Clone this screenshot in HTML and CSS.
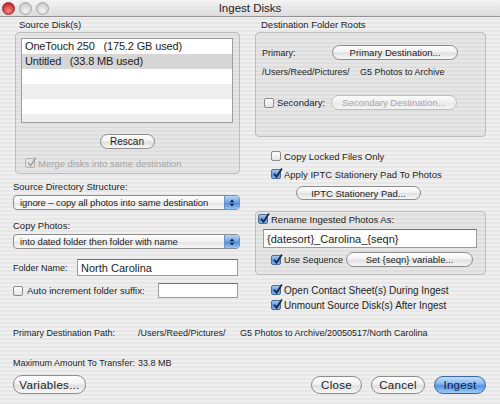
FILE: index.html
```html
<!DOCTYPE html>
<html lang="en">
<head>
  <meta charset="UTF-8" />
  <title>Ingest Disks</title>
  <link rel="stylesheet" href="styles.css">
</head>
<body>

  <!-- Titelbalk -->
  <div class="titlebar">
    <div class="lights">
      <span class="light red"></span>
      <span class="light"></span>
      <span class="light"></span>
    </div>
    <div class="title">Ingest Disks</div>
    <div></div>
  </div>

  <div class="content">
    <div class="columns">

      <!-- Linker kolom -->
      <div class="col">
        <div class="group-label">Source Disk(s)</div>
        <div class="group source">
          <ul class="disk-list">
            <li>OneTouch 250&nbsp;&nbsp; (175.2 GB used)</li>
            <li class="selected">Untitled&nbsp;&nbsp; (33.8 MB used)</li>
            <li></li>
            <li class="stripe"></li>
            <li></li>
            <li class="stripe"></li>
          </ul>
          <div class="center">
            <div class="btn rescan">Rescan</div>
          </div>
          <div class="check merge disabled">
            <span class="box plain"><svg viewBox="0 0 12 12"><path d="M2.2 6.2 L5 9.6 L10.8 0.6"/></svg></span>
            Merge disks into same destination
          </div>
        </div>

        <div class="field-label">Source Directory Structure:</div>
        <div class="popup">
          <span>ignore – copy all photos into same destination</span>
          <span class="arrows"><svg viewBox="0 0 10 12"><path d="M5 1.5 L8 5 L2 5 Z M5 10.5 L8 7 L2 7 Z"/></svg></span>
        </div>

        <div class="field-label gap">Copy Photos:</div>
        <div class="popup">
          <span>into dated folder then folder with name</span>
          <span class="arrows"><svg viewBox="0 0 10 12"><path d="M5 1.5 L8 5 L2 5 Z M5 10.5 L8 7 L2 7 Z"/></svg></span>
        </div>

        <div class="folder-row">
          <span class="folder-label">Folder Name:</span>
          <div class="textfield folder">North Carolina</div>
        </div>

        <div class="auto-row">
          <span class="box"></span>
          <span class="auto-label">Auto increment folder suffix:</span>
          <div class="textfield suffix"></div>
        </div>
      </div>

      <!-- Rechter kolom -->
      <div class="col">
        <div class="group-label">Destination Folder Roots</div>
        <div class="group dest">
          <div class="dest-row">
            <span class="dest-label">Primary:</span>
            <div class="btn dest-btn">Primary Destination...</div>
          </div>
          <div class="path-line">
            <span class="path-root">/Users/Reed/Pictures/</span>
            <span>G5 Photos to Archive</span>
          </div>
          <div class="dest-row secondary">
            <span class="box"></span>
            <span class="sec-label">Secondary:</span>
            <div class="btn dest-btn disabled">Secondary Destination...</div>
          </div>
        </div>

        <div class="check opt first">
          <span class="box"></span>
          Copy Locked Files Only
        </div>
        <div class="check opt">
          <span class="box on"><svg viewBox="0 0 12 12"><path d="M2.2 6.2 L5 9.6 L10.8 0.6"/></svg></span>
          Apply IPTC Stationery Pad To Photos
        </div>
        <div class="btn iptc">IPTC Stationery Pad...</div>

        <div class="group rename">
          <div class="check rename-check">
            <span class="box on"><svg viewBox="0 0 12 12"><path d="M2.2 6.2 L5 9.6 L10.8 0.6"/></svg></span>
            Rename Ingested Photos As:
          </div>
          <div class="textfield pattern">{datesort}_Carolina_{seqn}</div>
          <div class="seq-row">
            <span class="box on"><svg viewBox="0 0 12 12"><path d="M2.2 6.2 L5 9.6 L10.8 0.6"/></svg></span>
            <span class="seq-label">Use Sequence</span>
            <div class="btn seq-btn">Set {seqn} variable...</div>
          </div>
        </div>

        <div class="check opt big first-after">
          <span class="box on"><svg viewBox="0 0 12 12"><path d="M2.2 6.2 L5 9.6 L10.8 0.6"/></svg></span>
          Open Contact Sheet(s) During Ingest
        </div>
        <div class="check opt big">
          <span class="box on"><svg viewBox="0 0 12 12"><path d="M2.2 6.2 L5 9.6 L10.8 0.6"/></svg></span>
          Unmount Source Disk(s) After Ingest
        </div>
      </div>
    </div>

    <div class="info-row path">
      <span>Primary Destination Path:</span>
      <span>/Users/Reed/Pictures/</span>
      <span>G5 Photos to Archive/20050517/North Carolina</span>
    </div>

    <div class="info-row max">
      <span>Maximum Amount To Transfer:</span>
      <span>33.8 MB</span>
    </div>

    <div class="footer">
      <div class="btn big-btn variables">Variables...</div>
      <div class="footer-right">
        <div class="btn big-btn close">Close</div>
        <div class="btn big-btn cancel">Cancel</div>
        <div class="btn big-btn default ingest">Ingest</div>
      </div>
    </div>
  </div>

</body>
</html>
```

FILE: styles.css
```css
* {
  margin: 0;
  padding: 0;
  box-sizing: border-box;
}

body {
  width: 500px;
  height: 404px;
  overflow: hidden;
  font-family: "Liberation Sans", Arial, sans-serif;
  font-size: 9.5px;
  color: #1d1d1d;
  background: repeating-linear-gradient(#efefef 0 2px, #e7e7e7 2px 4px);
}

/* Titelbalk */
.titlebar {
  height: 17px;
  display: grid;
  grid-template-columns: 1fr auto 1fr;
  align-items: center;
  background: linear-gradient(#f3f3f3, #dcdcdc);
  border-bottom: 1px solid #929292;
}

.lights {
  display: flex;
  gap: 4px;
  padding-left: 2px;
}

.light {
  width: 13px;
  height: 13px;
  border-radius: 50%;
  border: 1px solid #a5a5a5;
  background: radial-gradient(circle at 50% 70%, #f4f4f4, #cfcfcf 70%, #b9b9b9);
}

.light.red {
  border-color: #9b2a2a;
  background: radial-gradient(circle at 50% 70%, #f28a8a, #d53a3a 60%, #a11d1d);
}

.title {
  font-size: 11.5px;
  color: #222;
}

/* Inhoud */
.content {
  padding: 2px 14px 0 13px;
}

.columns {
  display: grid;
  grid-template-columns: 227px 231px;
  gap: 15px;
}

.col {
  display: flex;
  flex-direction: column;
}

.group-label {
  height: 12px;
  line-height: 12px;
  padding-left: 6px;
}

.group {
  border: 1px solid #bcbcbc;
  border-radius: 4px;
  background: rgba(0, 0, 0, 0.035);
}

.group.source {
  margin: 1px 0 0 2px;
  height: 142px;
  padding: 5px 6px 0 5px;
}

.disk-list {
  list-style: none;
  height: 85px;
  overflow: hidden;
  background: #fff;
  border: 1px solid #9c9c9c;
  font-size: 11px;
  letter-spacing: -0.15px;
}

.disk-list li {
  height: 15px;
  line-height: 15px;
  padding-left: 3px;
}

.disk-list li.selected {
  background: #d6d6d6;
}

.disk-list li.stripe {
  background: #efefef;
}

.center {
  display: flex;
  justify-content: center;
}

/* Knoppen */
.btn {
  display: flex;
  align-items: center;
  justify-content: center;
  height: 15px;
  border: 1px solid #8c8c8c;
  border-radius: 8px;
  background: linear-gradient(#ffffff, #f1f1f1 45%, #e0e0e0 55%, #f7f7f7);
  font-size: 9.5px;
  color: #1d1d1d;
  white-space: nowrap;
  flex: none;
}

.btn.disabled {
  color: #a9a9a9;
  border-color: #bdbdbd;
  background: linear-gradient(#fbfbfb, #efefef 50%, #e9e9e9 55%, #f5f5f5);
}

.btn.rescan {
  margin-top: 11px;
  width: 55px;
  font-size: 10px;
}

.big-btn {
  height: 18px;
  border-radius: 9px;
  font-size: 11.5px;
  letter-spacing: 0.3px;
}

.btn.default {
  border-color: #3a68a6;
  background: linear-gradient(#c6ddf8, #82b4ee 45%, #5192e2 55%, #9fcdf8);
  color: #10233f;
}

/* Vinkjes */
.check {
  display: flex;
  align-items: center;
  gap: 3px;
  height: 12px;
  white-space: nowrap;
}

.box {
  width: 10px;
  height: 10px;
  flex: none;
  border: 1px solid #8a8a8a;
  border-radius: 2px;
  background: linear-gradient(#fdfdfd, #e4e4e4);
  position: relative;
}

.box svg {
  position: absolute;
  left: 0;
  top: -2px;
  width: 11px;
  height: 11px;
  overflow: visible;
}

.box svg path {
  fill: none;
  stroke: #15284a;
  stroke-width: 1.9;
}

.box.on {
  border-color: #4c6d98;
  background: linear-gradient(#a9cbf0, #5e93d4 55%, #7fb2ea);
}

.box.plain {
  border-color: #b1b1b1;
  background: transparent;
}

.check.disabled {
  color: #a4a4a4;
}

.check.disabled .box svg path {
  stroke: #9a9a9a;
  stroke-width: 1.4;
}

.check.merge {
  margin: 8px 0 0 4px;
}

/* Keuzemenu's */
.field-label {
  margin-top: 7px;
  height: 12px;
  line-height: 12px;
}

.field-label.gap {
  margin-top: 10px;
}

.popup {
  margin-top: 2px;
  height: 15px;
  display: flex;
  align-items: center;
  justify-content: space-between;
  border: 1px solid #8c8c8c;
  border-radius: 4px;
  background: linear-gradient(#ffffff, #f2f2f2 50%, #e4e4e4 55%, #f8f8f8);
  padding-left: 6px;
  overflow: hidden;
  letter-spacing: -0.1px;
}

.arrows {
  width: 15px;
  height: 100%;
  display: flex;
  align-items: center;
  justify-content: center;
  border-left: 1px solid #6d8fbd;
  background: linear-gradient(#b8d5f5, #6ca2e2 50%, #4f8bd8 55%, #98c6f5);
}

.arrows svg {
  width: 8px;
  height: 10px;
}

.arrows svg path {
  fill: #142848;
}

/* Tekstvelden */
.textfield {
  background: #fff;
  border: 1px solid #9b9b9b;
  border-top-color: #6f6f6f;
  font-size: 11px;
  display: flex;
  align-items: center;
  padding-left: 3px;
  white-space: nowrap;
}

.folder-row {
  margin-top: 10px;
  display: flex;
  align-items: center;
}

.folder-label {
  width: 64px;
  font-size: 9px;
}

.textfield.folder {
  width: 161px;
  height: 17px;
}

.auto-row {
  margin-top: 7px;
  display: flex;
  align-items: center;
  white-space: nowrap;
}

.auto-label {
  margin-left: 4px;
}

.textfield.suffix {
  margin: 0 2px 0 auto;
  width: 80px;
  height: 15px;
}

/* Bestemming */
.group.dest {
  margin-top: 1px;
  height: 105px;
  padding: 12px 0 0 6px;
}

.dest-row {
  display: flex;
  align-items: center;
  height: 15px;
  white-space: nowrap;
}

.dest-label {
  width: 70px;
  font-size: 9px;
}

.btn.dest-btn {
  width: 126px;
}

.path-line {
  margin-top: 6px;
  height: 12px;
  line-height: 12px;
  display: flex;
  font-size: 9px;
}

.path-root {
  width: 98px;
}

.dest-row.secondary {
  margin-top: 17px;
}

.dest-row.secondary .box {
  margin-left: 2px;
}

.sec-label {
  width: 57px;
  padding-left: 3px;
}

.check.opt {
  margin: 6px 0 0 16px;
}

.check.opt.first {
  margin-top: 13px;
}

.btn.iptc {
  margin: 6px 0 0 41px;
  width: 125px;
  height: 14px;
}

.group.rename {
  margin-top: 11px;
  height: 64px;
  padding: 1px 8px 0 1px;
}

.check.rename-check {
  margin-left: 1px;
}

.textfield.pattern {
  margin: 4px 0 0 6px;
  width: 214px;
  height: 19px;
}

.seq-row {
  margin: 4px 0 0 14px;
  display: flex;
  align-items: center;
  height: 15px;
  white-space: nowrap;
}

.seq-label {
  width: 65px;
  flex: none;
  padding-left: 3px;
  font-size: 9px;
}

.btn.seq-btn {
  width: 127px;
}

.check.opt.big {
  margin-top: 3px;
  font-size: 10px;
}

.check.opt.first-after {
  margin-top: 9px;
}

/* Onderste regels */
.info-row {
  display: grid;
  grid-template-columns: 125px 102px auto;
  height: 12px;
  line-height: 12px;
  font-size: 9px;
}

.info-row.path {
  margin-top: 16px;
}

.info-row.max {
  margin-top: 18px;
}

.footer {
  margin-top: 6px;
  display: flex;
  align-items: center;
}

.btn.variables {
  width: 73px;
  height: 19px;
}

.footer-right {
  margin-left: auto;
  display: flex;
  gap: 9px;
}

.btn.close {
  width: 51px;
}

.btn.cancel {
  width: 54px;
}

.btn.ingest {
  width: 52px;
}
```
